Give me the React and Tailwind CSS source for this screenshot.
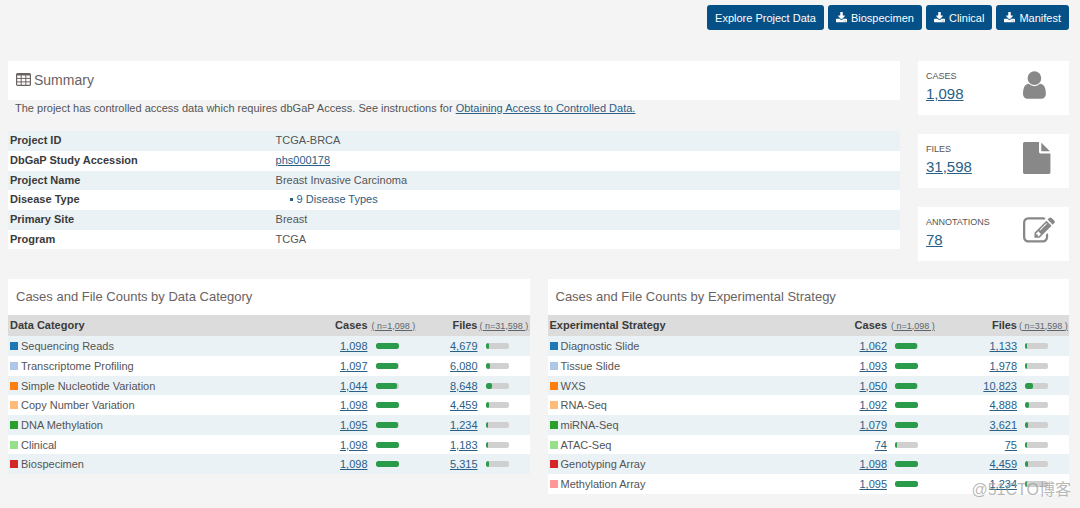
import React from 'react';

const ICONS = {
  download: {
    viewBox: '64 0 1664 1792',
    d: 'M1344 1344q0-26-19-45t-45-19-45 19-19 45 19 45 45 19 45-19 19-45zm256 0q0-26-19-45t-45-19-45 19-19 45 19 45 45 19 45-19 19-45zm128-224v320q0 40-28 68t-68 28h-1472q-40 0-68-28t-28-68v-320q0-40 28-68t68-28h465l135 136q58 56 136 56t136-56l136-136h464q40 0 68 28t28 68zm-325-569q17 41-14 70l-448 448q-18 19-45 19t-45-19l-448-448q-31-29-14-70 17-39 59-39h256v-448q0-26 19-45t45-19h256q26 0 45 19t19 45v448h256q42 0 59 39z',
  },
  user: {
    viewBox: '256 0 1792 1792',
    d: 'M1536 1399q0 109-62.5 187t-150.5 78h-854q-88 0-150.5-78t-62.5-187q0-85 8.5-160.5t31.5-152 58.5-131 94-89 134.5-34.5q131 128 313 128t313-128q76 0 134.5 34.5t94 89 58.5 131 31.5 152 8.5 160.5zm-256-887q0 159-112.5 271.5t-271.5 112.5-271.5-112.5-112.5-271.5 112.5-271.5 271.5-112.5 271.5 112.5 112.5 271.5z',
  },
  file: {
    viewBox: '128 0 1792 1792',
    d: 'M1152 512v-472q22 14 36 28l408 408q14 14 28 36h-472zm-128 32q0 40 28 68t68 28h544v1056q0 40-28 68t-68 28h-1344q-40 0-68-28t-28-68v-1600q0-40 28-68t68-28h800v544z',
  },
  edit: {
    viewBox: '0 0 1792 1792',
    d: 'M888 1184l116-116-152-152-116 116v56h96v96h56zm440-720q-16-16-33 1l-350 350q-17 17-1 33t33-1l350-350q17-17 1-33zm80 594v190q0 119-84.5 203.5t-203.5 84.5h-832q-119 0-203.5-84.5t-84.5-203.5v-832q0-119 84.5-203.5t203.5-84.5h832q63 0 117 25 15 7 18 23 3 17-9 29l-49 49q-14 14-32 8-23-6-45-6h-832q-66 0-113 47t-47 113v832q0 66 47 113t113 47h832q66 0 113-47t47-113v-126q0-13 9-22l64-64q15-15 35-7t20 29zm-96-738l288 288-672 672h-288v-288zm444 132l-92 92-288-288 92-92q28-28 68-28t68 28l152 152q28 28 28 68t-28 68z',
  },
};

const Icon = ({ name, className }) => (
  <svg viewBox={ICONS[name].viewBox} className={className} fill="currentColor" aria-hidden="true">
    <path d={ICONS[name].d} />
  </svg>
);

const TableIcon = () => (
  <svg viewBox="0 0 15 13" className="w-[15px] h-[13px] shrink-0" fill="none" stroke="currentColor" aria-hidden="true">
    <rect x="0.6" y="0.6" width="13.8" height="11.8" rx="1" strokeWidth="1.2" />
    <path d="M1 1.5h13" strokeWidth="2" />
    <path d="M5.2 1v11M9.8 1v11M1 5.4h13M1 8.9h13" strokeWidth="1" />
  </svg>
);

const actions = [
  { label: 'Explore Project Data' },
  { label: 'Biospecimen', download: true },
  { label: 'Clinical', download: true },
  { label: 'Manifest', download: true },
];

const stats = [
  { label: 'Cases', value: 1098, icon: 'user' },
  { label: 'Files', value: 31598, icon: 'file' },
  { label: 'Annotations', value: 78, icon: 'edit' },
];

const TOTAL_CASES = 1098;
const TOTAL_FILES = 31598;

const categories = [
  { name: 'Sequencing Reads', color: 'bg-[#1f77b4]', cases: 1098, files: 4679 },
  { name: 'Transcriptome Profiling', color: 'bg-[#aec7e8]', cases: 1097, files: 6080 },
  { name: 'Simple Nucleotide Variation', color: 'bg-[#ff7f0e]', cases: 1044, files: 8648 },
  { name: 'Copy Number Variation', color: 'bg-[#ffbb78]', cases: 1098, files: 4459 },
  { name: 'DNA Methylation', color: 'bg-[#2ca02c]', cases: 1095, files: 1234 },
  { name: 'Clinical', color: 'bg-[#98df8a]', cases: 1098, files: 1183 },
  { name: 'Biospecimen', color: 'bg-[#d62728]', cases: 1098, files: 5315 },
];

const strategies = [
  { name: 'Diagnostic Slide', color: 'bg-[#1f77b4]', cases: 1062, files: 1133 },
  { name: 'Tissue Slide', color: 'bg-[#aec7e8]', cases: 1093, files: 1978 },
  { name: 'WXS', color: 'bg-[#ff7f0e]', cases: 1050, files: 10823 },
  { name: 'RNA-Seq', color: 'bg-[#ffbb78]', cases: 1092, files: 4888 },
  { name: 'miRNA-Seq', color: 'bg-[#2ca02c]', cases: 1079, files: 3621 },
  { name: 'ATAC-Seq', color: 'bg-[#98df8a]', cases: 74, files: 75 },
  { name: 'Genotyping Array', color: 'bg-[#d62728]', cases: 1098, files: 4459 },
  { name: 'Methylation Array', color: 'bg-[#ff9896]', cases: 1095, files: 1234 },
];

const Link = ({ children, className = '' }) => (
  <a href="#" className={`text-[#2a6086] underline ${className}`}>{children}</a>
);

const Bar = ({ value, total }) => (
  <div className="w-[23px] h-1.5 rounded-xs bg-[#d0d0d0] overflow-hidden">
    <div className="h-full min-w-0.5 rounded-xs bg-[#2a9b4b]" style={{ width: `${(value / total) * 100}%` }} />
  </div>
);

const SummaryRow = ({ label, children }) => (
  <tr className="h-5 nth-[3n]:h-[19px] bg-white odd:bg-[#eaf2f6]">
    <th scope="row" className="w-[30%] pl-0.5 pb-0.5 text-left font-bold text-[#3a3a3a]">{label}</th>
    <td className="pb-0.5">{children}</td>
  </tr>
);

const CountTable = ({ title, heading, rows, barWidth }) => (
  <section className="flex-1 min-w-0">
    <h2 className="h-9 px-2 flex items-center bg-white text-[13px] text-[#6b6262]">{title}</h2>
    <table className="w-full table-fixed leading-4">
      <colgroup>
        <col />
        <col className="w-[50px]" />
        <col className={barWidth} />
        <col className="w-[50px]" />
        <col className="w-[52px]" />
      </colgroup>
      <thead>
        <tr className="h-[21px] bg-[#dcdcdc] text-[#3a3a3a]">
          <th className="pl-0.5 pb-0.5 text-left">{heading}</th>
          <th className="pb-0.5 text-right">Cases</th>
          <th className="pl-1 text-left font-normal text-[9px] whitespace-nowrap">
            <a href="#" className="underline text-[#5c666e]">( n=1,098 )</a>
          </th>
          <th className="pb-0.5 text-right">Files</th>
          <th className="pl-0.5 text-left font-normal text-[9px] whitespace-nowrap">
            <a href="#" className="underline text-[#5c666e]">( n=31,598 )</a>
          </th>
        </tr>
      </thead>
      <tbody>
        {rows.map((row) => (
          <tr key={row.name} className="h-5 nth-[3n]:h-[19px] bg-white odd:bg-[#eaf2f6]">
            <td className="pl-0.5">
              <span className="flex items-center gap-[3px]">
                <span className={`size-2 shrink-0 ${row.color}`} />
                {row.name}
              </span>
            </td>
            <td className="text-right"><Link>{row.cases.toLocaleString('en-US')}</Link></td>
            <td className="pl-2"><Bar value={row.cases} total={TOTAL_CASES} /></td>
            <td className="text-right"><Link>{row.files.toLocaleString('en-US')}</Link></td>
            <td className="pl-2"><Bar value={row.files} total={TOTAL_FILES} /></td>
          </tr>
        ))}
      </tbody>
    </table>
  </section>
);

const App = () => {
  return (
    <div className="relative min-h-screen bg-[#f4f4f4] pt-[5px] pl-2 pr-[11px] pb-3 font-['Liberation_Sans',Arial,sans-serif] text-[11px] leading-4 text-[#555]">
      <div className="flex justify-end gap-1">
        {actions.map((action) => (
          <button
            key={action.label}
            type="button"
            className="h-[25px] px-2 flex items-center gap-1 rounded-[3px] bg-[#055086] text-white"
          >
            {action.download && <Icon name="download" className="w-[11px] h-3" />}
            {action.label}
          </button>
        ))}
      </div>

      <div className="mt-[31px] flex items-start gap-[18px]">
        <section className="flex-1 min-w-0">
          <h1 className="h-[39px] px-2 pb-0.5 flex items-center gap-[3px] bg-white text-sm text-[#6b6262]">
            <TableIcon />
            Summary
          </h1>
          <p className="px-[7px] pb-[15px]">
            The project has controlled access data which requires dbGaP Access. See instructions for{' '}
            <Link>Obtaining Access to Controlled Data.</Link>
          </p>
          <table className="w-full table-fixed">
            <tbody>
              <SummaryRow label="Project ID">TCGA-BRCA</SummaryRow>
              <SummaryRow label="DbGaP Study Accession"><Link>phs000178</Link></SummaryRow>
              <SummaryRow label="Project Name">Breast Invasive Carcinoma</SummaryRow>
              <SummaryRow label="Disease Type">
                <button type="button" className="ml-3.5 flex items-center gap-1 text-[#2a6086]">
                  <span className="size-[3px] bg-[#2a6086]" />
                  9 Disease Types
                </button>
              </SummaryRow>
              <SummaryRow label="Primary Site">Breast</SummaryRow>
              <SummaryRow label="Program">TCGA</SummaryRow>
            </tbody>
          </table>
        </section>

        <aside className="w-[151px] shrink-0 flex flex-col gap-[19px]">
          {stats.map((stat) => (
            <div key={stat.label} className="h-[54px] pl-2 pr-3.5 flex justify-between bg-white">
              <div className="pt-[7px]">
                <div className="text-[9px] uppercase">{stat.label}</div>
                <Link className="block text-[15px] leading-5">{stat.value.toLocaleString('en-US')}</Link>
              </div>
              <Icon name={stat.icon} className="mt-2 size-8 text-[#888]" />
            </div>
          ))}
        </aside>
      </div>

      <div className="mt-[18px] flex items-start gap-[18px]">
        <CountTable
          title="Cases and File Counts by Data Category"
          heading="Data Category"
          rows={categories}
          barWidth="w-[60px]"
        />
        <CountTable
          title="Cases and File Counts by Experimental Strategy"
          heading="Experimental Strategy"
          rows={strategies}
          barWidth="w-20"
        />
      </div>

      <div className="absolute right-[9px] bottom-1.5 font-['Liberation_Sans','Noto_Sans_CJK_SC',sans-serif] text-base leading-6 text-[#999]/70 pointer-events-none">
        @51CTO博客
      </div>
    </div>
  );
};

export default App;
